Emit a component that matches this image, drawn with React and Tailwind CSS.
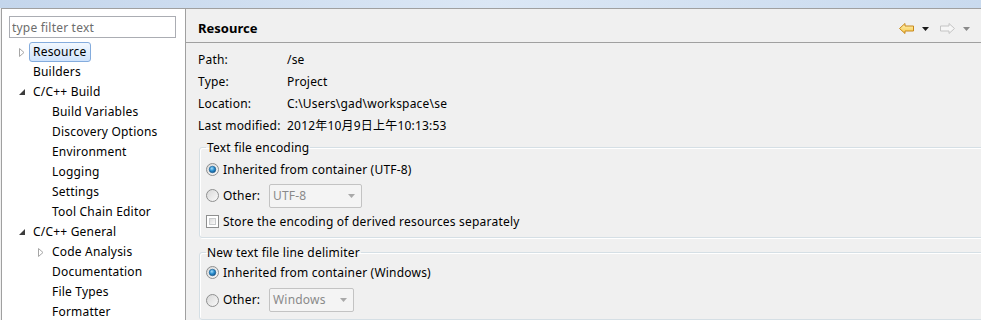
import { useState } from 'react'

const tree = [
  { label: 'Resource', level: 0, icon: 'closed', selected: true },
  { label: 'Builders', level: 0 },
  { label: 'C/C++ Build', level: 0, icon: 'open' },
  { label: 'Build Variables', level: 1 },
  { label: 'Discovery Options', level: 1 },
  { label: 'Environment', level: 1 },
  { label: 'Logging', level: 1 },
  { label: 'Settings', level: 1 },
  { label: 'Tool Chain Editor', level: 1 },
  { label: 'C/C++ General', level: 0, icon: 'open' },
  { label: 'Code Analysis', level: 1, icon: 'closed' },
  { label: 'Documentation', level: 1 },
  { label: 'File Types', level: 1 },
  { label: 'Formatter', level: 1 },
]

const props = [
  ['Path:', '/se'],
  ['Type:', 'Project'],
  ['Location:', 'C:\\Users\\gad\\workspace\\se'],
  ['Last modified:', '2012年10月9日上午10:13:53'],
]

function Twisty({ kind }) {
  if (kind === 'closed') {
    return (
      <svg width="6" height="9" viewBox="0 0 6 9">
        <path d="M0.5 0.5 L5 4.5 L0.5 8.5 Z" fill="#fff" stroke="#a6a6a6" />
      </svg>
    )
  }
  if (kind === 'open') {
    return (
      <svg width="6" height="6" viewBox="0 0 6 6">
        <path d="M6 0 L6 6 L0 6 Z" fill="#3c3c3c" />
      </svg>
    )
  }
  return null
}

function Radio({ checked }) {
  return (
    <svg width="13" height="13" viewBox="0 0 13 13" className="shrink-0">
      <defs>
        <linearGradient id="rOuter" x1="0" y1="0" x2="1" y2="1">
          <stop offset="0" stopColor="#d6d6d6" />
          <stop offset="1" stopColor="#fbfbfb" />
        </linearGradient>
        <radialGradient id="rDot" cx="0.4" cy="0.35" r="0.7">
          <stop offset="0" stopColor="#a6dcf8" />
          <stop offset="0.5" stopColor="#2a8fd0" />
          <stop offset="1" stopColor="#104f84" />
        </radialGradient>
      </defs>
      <circle cx="6.5" cy="6.5" r="6" fill="url(#rOuter)" stroke="#8e8f8f" />
      {checked && <circle cx="6.5" cy="6.5" r="3.3" fill="url(#rDot)" stroke="#1b5c8e" strokeWidth="0.6" />}
    </svg>
  )
}

function Checkbox() {
  return (
    <span className="w-[13px] h-[13px] shrink-0 border border-[#8e8f8f] bg-white p-[2px]">
      <span className="block w-full h-full border border-[#c9cbcd] bg-gradient-to-br from-[#dcdcdc] to-[#fbfbfb]" />
    </span>
  )
}

function Combo({ value, w }) {
  return (
    <div className={`${w} h-[24px] border border-[#c3c3c3] rounded-[2px] bg-[#f4f4f4] flex items-center`}>
      <span className="flex-1 pl-[3px] text-[#8a8a8a]">{value}</span>
      <svg width="7" height="4" viewBox="0 0 7 4" className="mr-[6px]">
        <path d="M0 0 L7 0 L3.5 4 Z" fill="#a9a9a9" />
      </svg>
    </div>
  )
}

function NavArrow({ dir, enabled }) {
  const d = dir === 'back'
    ? 'M0.5 5.5 L6 0.5 L6 3 L14.5 3 L14.5 8 L6 8 L6 10.5 Z'
    : 'M14.5 5.5 L9 0.5 L9 3 L0.5 3 L0.5 8 L9 8 L9 10.5 Z'
  return (
    <svg width="15" height="11" viewBox="0 0 15 11">
      <defs>
        <linearGradient id="navY" x1="0" y1="0" x2="0" y2="1">
          <stop offset="0" stopColor="#fff3b8" />
          <stop offset="1" stopColor="#f6c747" />
        </linearGradient>
      </defs>
      <path d={d} fill={enabled ? 'url(#navY)' : '#f6f6f6'} stroke={enabled ? '#c8881a' : '#c4c4c4'} strokeLinejoin="round" />
    </svg>
  )
}

function DropTri({ color }) {
  return (
    <svg width="7" height="4" viewBox="0 0 7 4">
      <path d="M0 0 L7 0 L3.5 4 Z" fill={color} />
    </svg>
  )
}

export default function App() {
  const [filter, setFilter] = useState('')

  return (
    <div className="w-[981px] h-[320px] overflow-hidden bg-[#f0f0f0] flex flex-col font-['Noto_Sans','Noto_Sans_CJK_SC',sans-serif] text-[12px] tracking-[0.2px] text-black">
      {/* window chrome strip */}
      <div className="h-[8px] shrink-0 bg-gradient-to-r from-[#c4d6ec] via-[#dbe7f5] to-[#c9daee]" />

      <div className="flex flex-1 min-h-0">
        {/* Sidebar tree */}
        <div className="ml-[1px] w-[185px] shrink-0 bg-white border-l border-r border-t border-[#a0a0a0]">
          <input
            value={filter}
            onChange={e => setFilter(e.target.value)}
            placeholder="type filter text"
            className="block mt-[7px] ml-[7px] w-[167px] h-[22px] border border-[#abadb3] px-[2px] text-[12px] placeholder:text-[#6d6d6d] outline-none"
          />
          <div className="mt-[4px]">
            {tree.map(item => (
              <div key={item.label} className={`h-[20px] flex items-center ${item.level === 0 ? 'pl-[17px]' : 'pl-[36px]'}`}>
                <span className="w-[10px] flex items-center">
                  <Twisty kind={item.icon} />
                </span>
                <span
                  className={`h-[20px] leading-[18px] px-[3px] border rounded-[3px] whitespace-nowrap ${
                    item.selected
                      ? 'border-[#84acdd] bg-gradient-to-b from-[#f2f8fe] to-[#cfe3fc]'
                      : 'border-transparent'
                  }`}>
                  {item.label}
                </span>
              </div>
            ))}
          </div>
        </div>

        {/* Property page */}
        <div className="flex-1 min-w-0 overflow-hidden border-t border-[#a0a0a0]">
          <div className="h-[34px] pt-[6px] pl-[12px] pr-[11px] flex items-center justify-between border-b border-[#a0a0a0]">
            <span className="font-bold text-[13px] tracking-normal">Resource</span>
            <div className="flex items-center">
              <NavArrow dir="back" enabled />
              <span className="ml-[8px]"><DropTri color="#1a1a1a" /></span>
              <span className="ml-[11px]"><NavArrow dir="fwd" /></span>
              <span className="ml-[8px]"><DropTri color="#8a8a8a" /></span>
            </div>
          </div>

          <div className="mt-[6px] pl-[12px]">
            {props.map(([k, v]) => (
              <div key={k} className="h-[22px] flex items-center">
                <span className="w-[89px] shrink-0">{k}</span>
                <span>{v}</span>
              </div>
            ))}
          </div>

          {/* Text file encoding */}
          <fieldset className="mt-[2px] ml-[13px] w-[800px] pl-[6px] pb-[2px] border border-[#d5dfe5] rounded-[3px] shadow-[inset_1px_1px_0_#fff,1px_1px_0_#fff]">
            <legend className="px-[1px] leading-[17px]">Text file encoding</legend>
            <div className="h-[27px] flex items-center gap-[3px]">
              <Radio checked />
              <span className="ml-[1px]">Inherited from container (UTF-8)</span>
            </div>
            <div className="h-[25px] flex items-center gap-[3px]">
              <Radio />
              <span className="ml-[1px] w-[43px]">Other:</span>
              <Combo value="UTF-8" w="w-[93px]" />
            </div>
            <div className="h-[27px] flex items-center gap-[4px]">
              <Checkbox />
              <span>Store the encoding of derived resources separately</span>
            </div>
          </fieldset>

          {/* Line delimiter */}
          <fieldset className="mt-[6px] ml-[13px] w-[800px] pl-[6px] pb-[6px] border border-[#d5dfe5] rounded-[3px] shadow-[inset_1px_1px_0_#fff,1px_1px_0_#fff]">
            <legend className="px-[1px] leading-[17px]">New text file line delimiter</legend>
            <div className="h-[23px] flex items-center gap-[3px]">
              <Radio checked />
              <span className="ml-[1px]">Inherited from container (Windows)</span>
            </div>
            <div className="mt-[3px] h-[26px] flex items-center gap-[3px]">
              <Radio />
              <span className="ml-[1px] w-[43px]">Other:</span>
              <Combo value="Windows" w="w-[85px]" />
            </div>
          </fieldset>
        </div>
      </div>
    </div>
  )
}
